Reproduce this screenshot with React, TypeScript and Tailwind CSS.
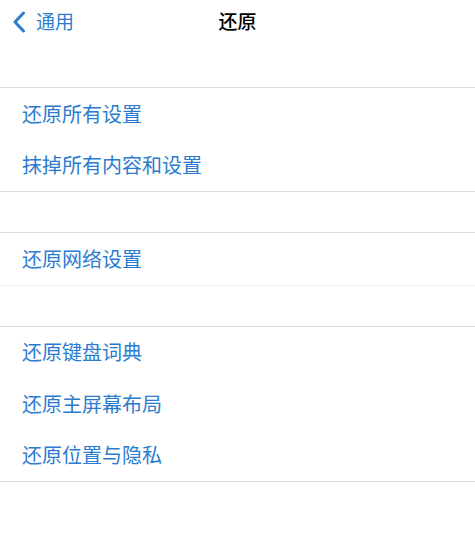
const font = { fontFamily: '"Noto Sans CJK SC", "Noto Sans", sans-serif' }

const sections: string[][] = [
  ['还原所有设置', '抹掉所有内容和设置'],
  ['还原网络设置'],
  ['还原键盘词典', '还原主屏幕布局', '还原位置与隐私'],
]

function Section({ items, faint }: { items: string[]; faint?: boolean }) {
  return (
    <div className={`border-t border-b border-t-[#dcdcdc] bg-white ${faint ? 'border-b-[#f0f0f0]' : 'border-b-[#dcdcdc]'}`}>
      {items.map((t) => (
        <div key={t} className="flex h-[51.5px] items-center pl-[22px] text-[20px] text-[#2b7ccf]">
          {t}
        </div>
      ))}
    </div>
  )
}

export default function App() {
  return (
    <div className="min-h-[547px] w-[475px] bg-white" style={font}>
      <header className="relative flex h-[43px] items-center">
        <button className="flex items-center pl-[12px] text-[19px] text-[#2b7ccf]">
          <svg width="14" height="22" viewBox="0 0 14 22" fill="none" className="mr-[10px]">
            <path d="M11.5 2L3 11l8.5 9" stroke="#2b7ccf" strokeWidth="3" strokeLinecap="round" strokeLinejoin="round" />
          </svg>
          通用
        </button>
        <h1 className="absolute left-1/2 -translate-x-1/2 text-[19px] font-medium text-black">还原</h1>
      </header>
      <div className="flex flex-col gap-[40px] pt-[44px]">
        {sections.map((s, i) => (
          <Section key={i} items={s} faint={i === 1} />
        ))}
      </div>
    </div>
  )
}
